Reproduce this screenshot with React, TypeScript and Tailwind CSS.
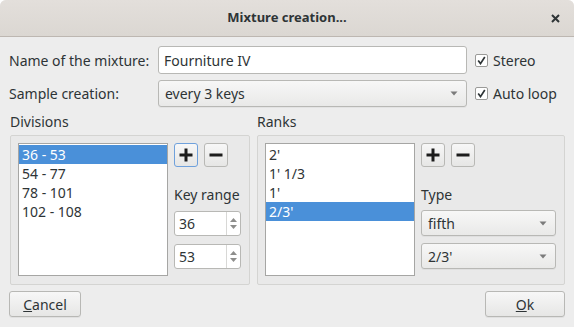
import React from "react";

const divisions = ["36 - 53", "54 - 77", "78 - 101", "102 - 108"];
const ranks = ["2'", "1' 1/3", "1'", "2/3'"];

function Arrow() {
  return (
    <svg width="8" height="5" viewBox="0 0 8 5" className="shrink-0">
      <path d="M0.5 0.5h7L4 4.5z" fill="#7b7b7b" />
    </svg>
  );
}

function Check({ label }: { label: string }) {
  return (
    <label className="ml-[8px] flex items-center gap-[5px]">
      <span className="flex h-[13px] w-[13px] items-center justify-center rounded-[2px] border border-[#9a9a98] bg-white">
        <svg width="9" height="9" viewBox="0 0 9 9">
          <path
            d="M1.2 4.6L3.5 7.6L7.8 1"
            stroke="#2e3436"
            strokeWidth="1.7"
            fill="none"
          />
        </svg>
      </span>
      <span>{label}</span>
    </label>
  );
}

function Combo({ value, className }: { value: string; className: string }) {
  return (
    <div
      className={`flex items-center justify-between rounded-[3px] border border-[#b8b8b5] bg-gradient-to-b from-[#f7f7f7] to-[#e9e9e8] pl-[6px] pr-[8px] shadow-[0_1px_0_rgba(0,0,0,0.04)] ${className}`}
    >
      <span>{value}</span>
      <Arrow />
    </div>
  );
}

function Spin({ value, className }: { value: string; className: string }) {
  return (
    <div
      className={`flex h-[25px] w-[67px] rounded-[3px] border border-[#b8b8b5] bg-white ${className}`}
    >
      <span className="flex flex-1 items-center pl-[4px]">{value}</span>
      <div className="flex w-[14px] flex-col items-center justify-center gap-[3px] border-l border-[#d8d8d6]">
        <svg width="7" height="4" viewBox="0 0 7 4">
          <path d="M0 4h7L3.5 0z" fill="#8e8e8c" />
        </svg>
        <svg width="7" height="4" viewBox="0 0 7 4">
          <path d="M0 0h7L3.5 4z" fill="#8e8e8c" />
        </svg>
      </div>
    </div>
  );
}

function ToolButton({ kind, focused }: { kind: "plus" | "minus"; focused?: boolean }) {
  return (
    <button
      className={`flex h-[24px] w-[24px] items-center justify-center rounded-[3px] border bg-gradient-to-b from-[#f7f7f7] to-[#e6e6e5] ${
        focused ? "border-[#6fa1dc]" : "border-[#b8b8b5]"
      }`}
    >
      <svg width="14" height="14" viewBox="0 0 14 14">
        <path d="M0.5 7h13" stroke="#1c1c1c" strokeWidth="3" />
        {kind === "plus" && <path d="M7 0.5v13" stroke="#1c1c1c" strokeWidth="3" />}
      </svg>
    </button>
  );
}

function ListBox({ items, selected }: { items: string[]; selected: number }) {
  return (
    <div className="h-[133px] w-[150px] shrink-0 border border-[#a6a6a4] bg-white pt-px">
      {items.map((item, i) => (
        <div
          key={item}
          className={`flex h-[19px] items-center pl-[3px] ${
            i === selected ? "bg-[#4a90d9] text-white" : ""
          }`}
        >
          {item}
        </div>
      ))}
    </div>
  );
}

function PushButton({ children, className }: { children: React.ReactNode; className: string }) {
  return (
    <button
      className={`flex h-[26px] items-center justify-center rounded-[3px] border border-[#b8b8b5] bg-gradient-to-b from-[#f7f7f7] to-[#e6e6e5] shadow-[0_1px_0_rgba(0,0,0,0.05)] ${className}`}
    >
      {children}
    </button>
  );
}

export default function App() {
  return (
    <div className="min-h-screen bg-white">
      <div className="flex h-[327px] w-[574px] flex-col overflow-hidden rounded-t-[6px] bg-[#ededed] font-['Noto_Sans',sans-serif] text-[14px] text-[#2e3436]">
        {/* title bar */}
        <div className="relative flex h-[37px] shrink-0 items-center justify-center border-b border-[#bdb7b1] bg-gradient-to-b from-[#e3dfdb] to-[#dbd7d2]">
          <span className="text-[13px] font-bold">Mixture creation...</span>
          <svg
            width="9"
            height="9"
            viewBox="0 0 9 9"
            className="absolute right-[14px] top-[14px]"
          >
            <path d="M1 1l7 7M8 1l-7 7" stroke="#2e3436" strokeWidth="2" />
          </svg>
        </div>

        <div className="flex flex-col px-[9px] pt-[9px]">
          <div className="flex h-[28px] items-center">
            <span className="w-[149px]">Name of the mixture:</span>
            <div className="flex h-[28px] w-[309px] items-center rounded-[3px] border border-[#b8b8b5] bg-white pl-[5px]">
              Fourniture IV
            </div>
            <Check label="Stereo" />
          </div>

          <div className="mt-[6px] flex h-[27px] items-center">
            <span className="w-[149px]">Sample creation:</span>
            <Combo value="every 3 keys" className="h-[27px] w-[309px]" />
            <Check label="Auto loop" />
          </div>

          <div className="mt-[5px] flex gap-[7px] pl-px">
            <div className="flex w-[240px] flex-col">
              <span className="h-[20px] leading-[20px]">Divisions</span>
              <div className="mt-[3px] flex h-[150px] gap-[6px] rounded-[2px] border border-[#d4d4d2] bg-[#e9e9e9] p-[7px]">
                <ListBox items={divisions} selected={0} />
                <div className="flex w-[67px] flex-col">
                  <div className="flex gap-[6px]">
                    <ToolButton kind="plus" focused />
                    <ToolButton kind="minus" />
                  </div>
                  <span className="mt-[19px] h-[18px] leading-[18px]">Key range</span>
                  <Spin value="36" className="mt-[7px]" />
                  <Spin value="53" className="mt-[8px]" />
                </div>
              </div>
            </div>

            <div className="flex w-[308px] flex-col">
              <span className="h-[20px] leading-[20px]">Ranks</span>
              <div className="mt-[3px] flex h-[150px] gap-[6px] rounded-[2px] border border-[#d4d4d2] bg-[#e9e9e9] p-[7px]">
                <ListBox items={ranks} selected={3} />
                <div className="flex w-[135px] flex-col">
                  <div className="flex gap-[6px]">
                    <ToolButton kind="plus" />
                    <ToolButton kind="minus" />
                  </div>
                  <span className="mt-[19px] h-[18px] leading-[18px]">Type</span>
                  <Combo value="fifth" className="mt-[6px] h-[26px]" />
                  <Combo value="2/3'" className="mt-[7px] h-[26px]" />
                </div>
              </div>
            </div>
          </div>

          <div className="mt-[6px] flex justify-between">
            <PushButton className="w-[72px]">
              <u>C</u>ancel
            </PushButton>
            <PushButton className="w-[80px]">
              <u>O</u>k
            </PushButton>
          </div>
        </div>
      </div>
    </div>
  );
}
